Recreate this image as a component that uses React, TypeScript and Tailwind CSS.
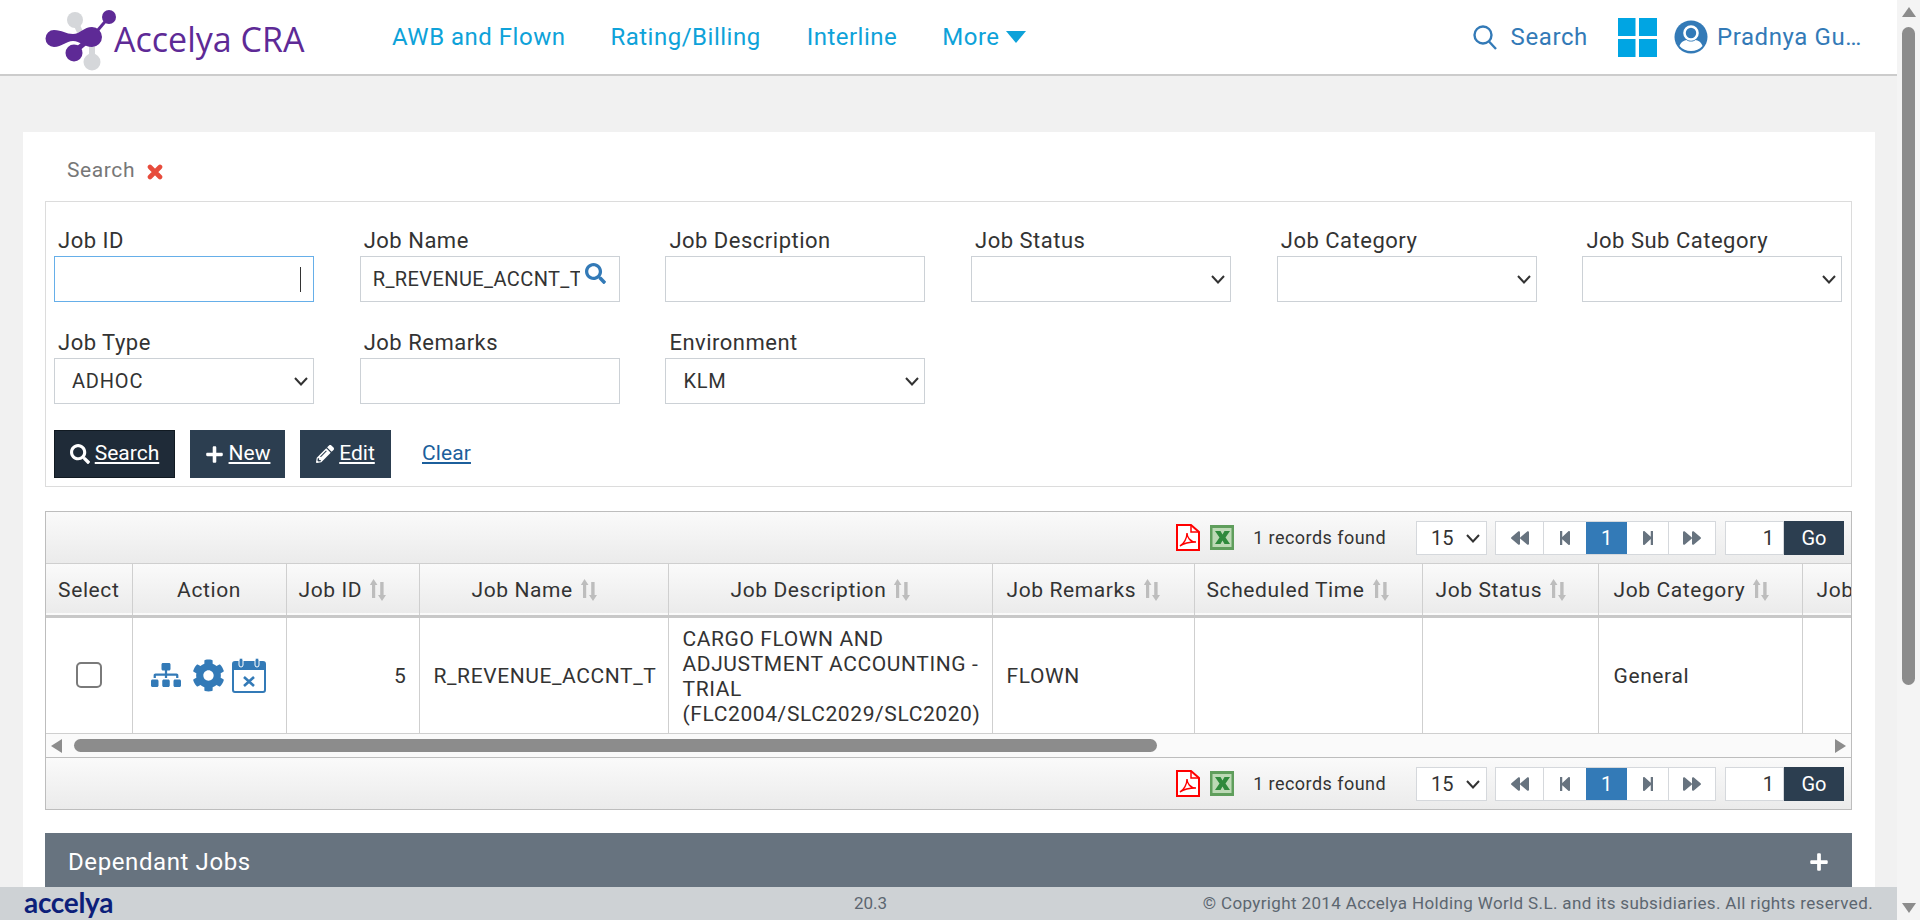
import React from "react";
import { FaSearch, FaPlus, FaPencilAlt, FaSitemap, FaCog, FaBackward, FaStepBackward, FaStepForward, FaForward } from "react-icons/fa";

const Logo = () => (
  <svg width="90" height="70" viewBox="40 0 90 70" className="shrink-0">
    <path d="M90 35 L107 15" stroke="#5e2a96" strokeWidth="3" fill="none" />
    <path d="M90 40 L90 58" stroke="#d5d7da" strokeWidth="6" fill="none" />
    <path d="M72 17 L78 30" stroke="#d5d7da" strokeWidth="6" fill="none" />
    <circle cx="73" cy="18" r="8" fill="#d5d7da" />
    <circle cx="90" cy="60" r="8.5" fill="#d5d7da" />
    <path d="M52 28 C60 28 64 32 71 32 C78 32 82 25 90 25 A10 10 0 0 1 90 45 C82 45 78 39 71 39 C64 39 60 45 52 45 A8.5 8.5 0 0 1 52 28 Z" fill="#5e2a96" />
    <path d="M84 40 L72 50" stroke="#5e2a96" strokeWidth="5" fill="none" />
    <circle cx="72" cy="51" r="8.5" fill="#5e2a96" />
    <circle cx="107" cy="15" r="7" fill="#5e2a96" />
  </svg>
);

const WinIcon = () => (
  <svg width="39" height="39" viewBox="0 0 39 39" className="shrink-0">
    <rect x="0" y="0" width="17.5" height="18" fill="#00a5e3" />
    <rect x="21" y="0" width="18" height="18" fill="#00a5e3" />
    <rect x="0" y="21" width="17.5" height="18" fill="#00a5e3" />
    <rect x="21" y="21" width="18" height="18" fill="#00a5e3" />
  </svg>
);

const UserIcon = () => (
  <svg width="34" height="34" viewBox="0 0 34 34" className="shrink-0">
    <circle cx="17" cy="17" r="16.5" fill="#337ab7" />
    <circle cx="17" cy="13" r="6.5" fill="none" stroke="#fff" strokeWidth="2.6" />
    <path d="M5.5 26 C7 21.5 10.5 20.5 12.5 20 C15 22 19 22 21.5 20 C24 20.5 27 21.5 28.5 26 C25.5 29.5 21.5 31 17 31 C12.5 31 8.5 29.5 5.5 26 Z" fill="#fff" />
  </svg>
);

const SortIcon = () => (
  <svg width="16" height="22" viewBox="0 0 16 22" className="inline-block shrink-0">
    <path d="M3.5 0 L7.5 6 H5.2 V19 H2 V6 H-0.2 Z" fill="#bdbdbd" />
    <path d="M12 22 L8 16 H10.2 V3 H13.6 V16 H16 Z" fill="#bdbdbd" />
  </svg>
);

const CalendarIcon = () => (
  <svg width="34" height="36" viewBox="0 0 34 36" className="shrink-0">
    <rect x="1" y="5" width="32" height="30" rx="2" fill="none" stroke="#337ab7" strokeWidth="2" />
    <rect x="1" y="5" width="32" height="8" fill="#337ab7" />
    <rect x="7" y="1" width="4" height="9" rx="2" fill="#337ab7" stroke="#fff" strokeWidth="1" />
    <rect x="23" y="1" width="4" height="9" rx="2" fill="#337ab7" stroke="#fff" strokeWidth="1" />
    <path d="M12 20 L22 29 M22 20 L12 29" stroke="#337ab7" strokeWidth="2.6" />
  </svg>
);

const PdfIcon = () => (
  <svg width="24" height="27" viewBox="0 0 24 27" className="shrink-0">
    <path d="M1 1 H15 L23 8 V26 H1 Z" fill="#fff" stroke="#f00" strokeWidth="2" />
    <path d="M15 1 V8 H23" fill="none" stroke="#f00" strokeWidth="1.5" />
    <path d="M4 22 C8 20 11 14 11 9 C11 13 14 18 20 18 C15 18 8 19 4 22 Z" fill="none" stroke="#f00" strokeWidth="1.4" />
  </svg>
);

const ExcelIcon = () => (
  <svg width="24" height="25" viewBox="0 0 24 25" className="shrink-0">
    <rect x="0" y="0" width="24" height="25" fill="#5f9e5c" />
    <rect x="2.5" y="3" width="19" height="19" fill="#bcd9b5" />
    <path d="M5 6 H10.5 L12.5 9.5 L14.5 6 H20 L15.5 12.5 L20 19 H14.5 L12.5 15.5 L10.5 19 H5 L9.5 12.5 Z" fill="#2f8a3c" />
  </svg>
);

const Tri = ({ dir }: { dir: "l" | "r" | "u" | "d" }) => {
  const vertical = dir === "u" || dir === "d";
  const d = { l: "M0 7 L11 0 V14 Z", r: "M11 7 L0 0 V14 Z", u: "M7 0 L14 10 H0 Z", d: "M7 10 L14 0 H0 Z" }[dir];
  const w = vertical ? 14 : 11;
  const h = vertical ? 10 : 14;
  return (
    <svg width={w} height={h} viewBox={`0 0 ${w} ${h}`} className="shrink-0">
      <path d={d} fill="#8c8c8c" />
    </svg>
  );
};

const Chevron = ({ cls }: { cls: string }) => (
  <svg width="14" height="9" viewBox="0 0 14 9" fill="none" stroke="#333" strokeWidth="2" className={`pointer-events-none absolute ${cls}`}>
    <path d="M1 1 L7 7.5 L13 1" />
  </svg>
);

const Field = ({ label, children }: { label: string; children: React.ReactNode }) => (
  <div className="w-[260px] shrink-0">
    <div className="h-[26px] whitespace-nowrap pl-[4px] text-[22px] leading-[28px] tracking-[0.5px] text-[#333]">{label}</div>
    <div className="relative mt-[3px] h-[46px]">{children}</div>
  </div>
);

const selectCls = "h-full w-full appearance-none border border-[#ccd1d6] bg-white pl-[17px] pr-[4px] text-[20px] tracking-[0.8px] text-[#333] outline-none";
const inputBase = "h-full w-full border bg-white pl-[12px] pr-[39px] text-[20px] tracking-[0.4px] text-[#333] outline-none";
const inputCls = `${inputBase} border-[#ccd1d6]`;

const Sel = ({ value = "" }: { value?: string }) => (
  <>
    <select className={selectCls} defaultValue={value}>
      <option value=""></option>
      {value ? <option value={value}>{value}</option> : null}
    </select>
    <Chevron cls="right-[6px] top-[19px]" />
  </>
);

const Toolbar = ({ border }: { border: string }) => (
  <div className={`flex h-[52px] items-center justify-end bg-gradient-to-b from-[#fafafa] to-[#ebebeb] pr-[7px] ${border}`}>
    <PdfIcon />
    <div className="ml-[10px]"><ExcelIcon /></div>
    <span className="ml-[19px] whitespace-nowrap text-[18px] tracking-[0.45px] text-[#333]">1 records found</span>
    <div className="relative ml-[30px] h-[34px] w-[71px]">
      <select className="h-full w-full appearance-none border border-[#d5d8dc] bg-white pl-[14px] text-[20px] text-[#333] outline-none" defaultValue="15">
        <option value="15">15</option>
      </select>
      <Chevron cls="right-[7px] top-[13px]" />
    </div>
    <div className="ml-[8px] flex h-[34px] w-[221px] border border-[#d5d8dc] bg-white text-[#67737f]">
      <div className="flex w-[48px] items-center justify-center border-r border-[#d5d8dc]"><FaBackward size={18} /></div>
      <div className="flex w-[42px] items-center justify-center"><FaStepBackward size={16} /></div>
      <div className="flex w-[41px] items-center justify-center bg-[#337ab7] text-[20px] text-white">1</div>
      <div className="flex w-[42px] items-center justify-center border-r border-[#d5d8dc]"><FaStepForward size={16} /></div>
      <div className="flex flex-1 items-center justify-center"><FaForward size={18} /></div>
    </div>
    <div className="ml-[9px] flex h-[34px] w-[59px] items-center justify-end border border-[#d5d8dc] bg-white pr-[9px] text-[20px] text-[#333]">1</div>
    <div className="flex h-[34px] w-[60px] items-center justify-center bg-[#2c3e50] text-[20px] text-white">Go</div>
  </div>
);

const cols = [
  { w: "w-[86px]", label: "Select", cls: "text-center", sort: false },
  { w: "w-[154px]", label: "Action", cls: "text-center", sort: false },
  { w: "w-[133px]", label: "Job ID", cls: "pl-[12px]", sort: true },
  { w: "w-[249px]", label: "Job Name", cls: "pl-[52px]", sort: true },
  { w: "w-[324px]", label: "Job Description", cls: "pl-[62px]", sort: true },
  { w: "w-[202px]", label: "Job Remarks", cls: "pl-[14px]", sort: true },
  { w: "w-[228px]", label: "Scheduled Time", cls: "pl-[12px]", sort: true },
  { w: "w-[176px]", label: "Job Status", cls: "pl-[13px]", sort: true },
  { w: "w-[204px]", label: "Job Category", cls: "pl-[15px]", sort: true },
  { w: "w-[200px]", label: "Job Sub Category", cls: "pl-[14px]", sort: true },
];

export default function App() {
  return (
    <div className="flex h-[920px] w-full overflow-hidden font-['Roboto',sans-serif] text-[#333]">
      <div className="flex min-w-0 flex-1 flex-col">
        <header className="flex h-[76px] shrink-0 items-center border-b-2 border-[#cccccc] bg-white">
          <div className="flex w-[392px] shrink-0 items-center pl-[42px]">
            <Logo />
            <span className="ml-[-18px] mt-[4px] whitespace-nowrap font-['Open_Sans',sans-serif] text-[34px] leading-none text-[#5e2a96]">Accelya CRA</span>
          </div>
          <nav className="flex items-center whitespace-nowrap text-[24px] tracking-[0.5px] text-[#0ea2d9]">
            <span>AWB and Flown</span>
            <span className="ml-[45px]">Rating/Billing</span>
            <span className="ml-[46px]">Interline</span>
            <span className="ml-[45px]">More</span>
            <svg width="20" height="12" viewBox="0 0 20 12" className="ml-[6px]"><path d="M0 0 H20 L10 12 Z" fill="#0ea2d9" /></svg>
          </nav>
          <div className="ml-auto flex items-center whitespace-nowrap pr-[35px] text-[24px] tracking-[0.6px] text-[#337ab7]">
            <svg width="24" height="25" viewBox="0 0 24 25" fill="none" stroke="#337ab7" strokeWidth="2.4"><circle cx="10" cy="10" r="8.5" /><path d="M16 16.5 L23 24" /></svg>
            <span className="ml-[14px]">Search</span>
            <div className="ml-[30px]"><WinIcon /></div>
            <div className="ml-[17px]"><UserIcon /></div>
            <span className="ml-[9px]">Pradnya Gu…</span>
          </div>
        </header>

        <main className="min-h-0 flex-1 overflow-hidden bg-[#f1f1f1] pl-[23px] pr-[22px] pt-[56px]">
          <div className="bg-white pb-[30px] pl-[22px] pr-[23px]">
            <div className="flex h-[69px] items-center pl-[22px] pt-[9px]">
              <span className="text-[21px] tracking-[0.6px] text-[#777]">Search</span>
              <svg width="16" height="16" viewBox="0 0 16 16" className="ml-[12px] mt-[1px]" fill="none" stroke="#e74c3c" strokeWidth="4.6" strokeLinecap="round"><path d="M3 3 L13 13 M13 3 L3 13" /></svg>
            </div>

            <div className="h-[286px] border border-[#dcdcdc] pl-[8px] pr-[8px] pt-[25px]">
              <div className="flex gap-[45.7px]">
                <Field label="Job ID">
                  <input className={`${inputBase} border-[#66afe9]`} readOnly value="" />
                  <span className="absolute left-[246px] top-[11px] h-[25px] w-px bg-[#333]"></span>
                </Field>
                <Field label="Job Name">
                  <input className={inputCls} readOnly value="R_REVENUE_ACCNT_TRIAL" />
                  <FaSearch className="absolute right-[14px] top-[7px] text-[#337ab7]" size={21} />
                </Field>
                <Field label="Job Description"><input className={inputCls} readOnly value="" /></Field>
                <Field label="Job Status"><Sel /></Field>
                <Field label="Job Category"><Sel /></Field>
                <Field label="Job Sub Category"><Sel /></Field>
              </div>
              <div className="mt-[27px] flex gap-[45.7px]">
                <Field label="Job Type"><Sel value="ADHOC" /></Field>
                <Field label="Job Remarks"><input className={inputCls} readOnly value="" /></Field>
                <Field label="Environment"><Sel value="KLM" /></Field>
              </div>
              <div className="mt-[26px] flex h-[48px] items-stretch text-[21px] text-white">
                <button className="flex w-[121px] items-center justify-center border border-[#111a22] bg-[#1f2b38]">
                  <FaSearch size={20} /><span className="ml-[5px] underline underline-offset-2">Search</span>
                </button>
                <button className="ml-[15px] flex w-[95px] items-center justify-center bg-[#2c3e50]">
                  <FaPlus size={19} /><span className="ml-[5px] underline underline-offset-2">New</span>
                </button>
                <button className="ml-[15px] flex w-[91px] items-center justify-center bg-[#2c3e50]">
                  <FaPencilAlt size={18} /><span className="ml-[5px] underline underline-offset-2">Edit</span>
                </button>
                <span className="ml-[31px] flex items-center tracking-[0.1px] text-[#1c5f9c] underline underline-offset-2">Clear</span>
              </div>
            </div>

            <div className="mt-[24px] border border-[#bdbdbd]">
              <Toolbar border="border-b border-[#cfcfcf]" />
              <div className="overflow-hidden">
                <table className="w-[1956px] table-fixed border-collapse text-[21px] tracking-[0.6px] text-[#333]">
                  <thead>
                    <tr className="h-[52px] border-b-[3px] border-[#c8c8c8] bg-gradient-to-b from-[#fafafa] to-[#ebebeb]">
                      {cols.map((c) => (
                        <th key={c.label} className={`${c.w} whitespace-nowrap border-r border-[#cfcfcf] p-0 pt-[2px] font-normal ${c.cls} ${c.sort ? "text-left" : ""}`}>
                          <span className="inline-flex items-center gap-[8px]">{c.label}{c.sort ? <SortIcon /> : null}</span>
                        </th>
                      ))}
                    </tr>
                  </thead>
                  <tbody>
                    <tr className="h-[117px]">
                      <td className="border-r border-[#cfcfcf] text-center">
                        <input type="checkbox" className="mt-[-2px] h-[26px] w-[26px] appearance-none rounded-[5px] border-2 border-[#7a7a7a] bg-white align-middle" readOnly />
                      </td>
                      <td className="border-r border-[#cfcfcf]">
                        <div className="flex items-center pl-[18px] text-[#337ab7]">
                          <FaSitemap size={30} />
                          <div className="ml-[11px]"><FaCog size={33} /></div>
                          <div className="ml-[7px]"><CalendarIcon /></div>
                        </div>
                      </td>
                      <td className="border-r border-[#cfcfcf] pr-[12px] pt-[3px] text-right">5</td>
                      <td className="whitespace-nowrap border-r border-[#cfcfcf] pl-[14px] pt-[3px]">R_REVENUE_ACCNT_T</td>
                      <td className="border-r border-[#cfcfcf] pl-[14px] pr-[9px] pt-[3px] leading-[25px]">CARGO FLOWN AND ADJUSTMENT ACCOUNTING - TRIAL (FLC2004/SLC2029/SLC2020)</td>
                      <td className="border-r border-[#cfcfcf] pl-[14px] pt-[3px]">FLOWN</td>
                      <td className="border-r border-[#cfcfcf]"></td>
                      <td className="border-r border-[#cfcfcf]"></td>
                      <td className="border-r border-[#cfcfcf] pl-[15px] pt-[3px]">General</td>
                      <td></td>
                    </tr>
                  </tbody>
                </table>
              </div>
              <div className="flex h-[24px] items-center border-t border-[#cfcfcf] bg-[#fafafa] pl-[5px] pr-[5px]">
                <Tri dir="l" />
                <div className="ml-[12px] h-[13px] w-[1083px] rounded-full bg-[#8c8c8c]"></div>
                <div className="ml-auto"><Tri dir="r" /></div>
              </div>
              <Toolbar border="border-t border-[#bdbdbd]" />
            </div>

            <div className="mt-[23px] flex h-[58px] items-center justify-between bg-[#67737f] pl-[23px] pr-[23px] text-[24px] tracking-[0.6px] text-white">
              <span>Dependant Jobs</span>
              <FaPlus size={20} />
            </div>
          </div>
        </main>

        <footer className="flex h-[33px] shrink-0 items-center bg-[#ced2d5] pl-[24px] pr-[24px] text-[#5c6670]">
          <span className="mt-[-4px] w-[100px] font-['Lato',sans-serif] text-[28px] font-bold leading-none tracking-[-0.3px] text-[#0d1f7a]">accelya</span>
          <span className="ml-[730px] text-[17px]">20.3</span>
          <span className="ml-auto whitespace-nowrap text-[17px] tracking-[0.36px]">© Copyright 2014 Accelya Holding World S.L. and its subsidiaries. All rights reserved.</span>
        </footer>
      </div>

      <aside className="flex w-[23px] shrink-0 flex-col items-center bg-[#f4f4f4] pb-[7px] pt-[7px]">
        <Tri dir="u" />
        <div className="ml-[-1px] mt-[10px] h-[658px] w-[13px] rounded-full bg-[#8c8c8c]"></div>
        <div className="mt-auto"><Tri dir="d" /></div>
      </aside>
    </div>
  );
}
